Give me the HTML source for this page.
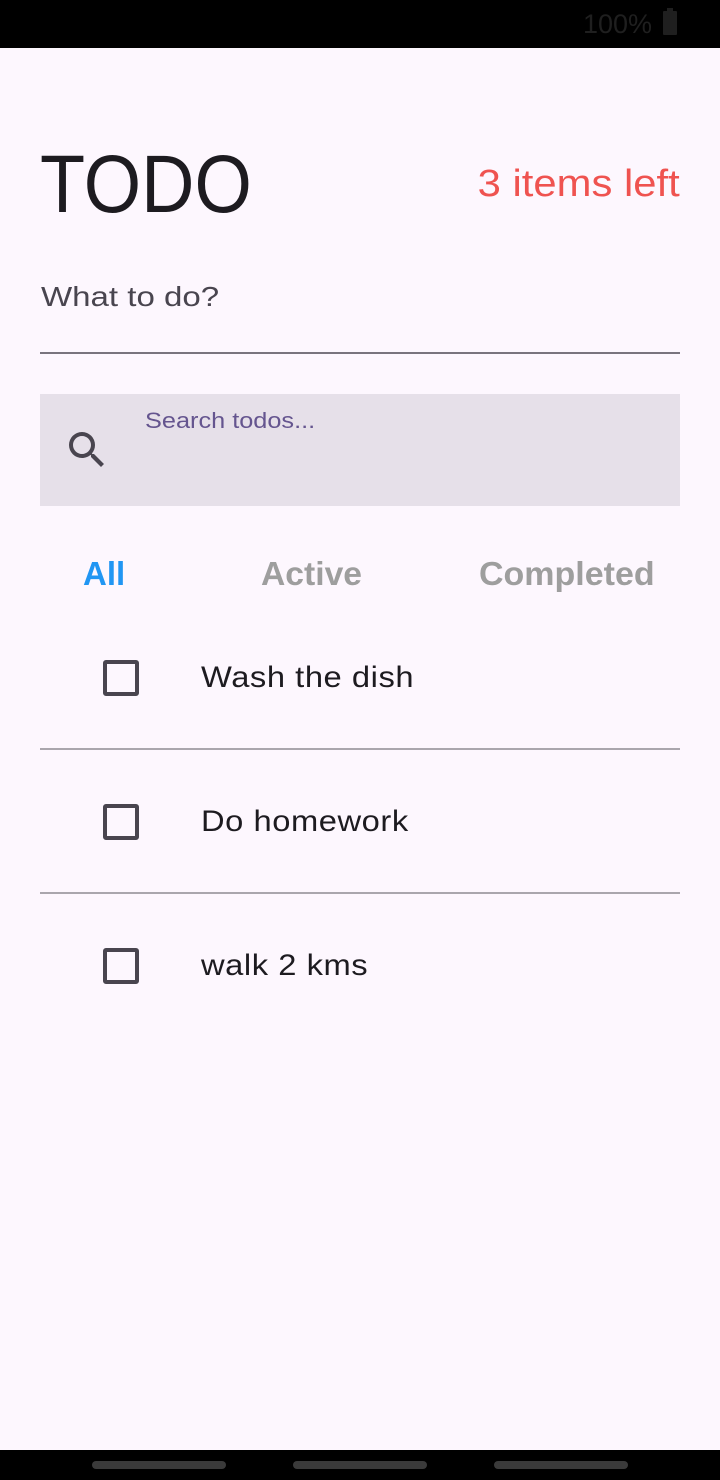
<!DOCTYPE html>
<html><head><meta charset="utf-8"><style>
body{margin:0;width:720px;height:1480px;background:#fdf7fe;font-family:"Liberation Sans",sans-serif;position:relative;overflow:hidden;color:#1d1b20}
.abs{position:absolute;white-space:nowrap}
.cb{position:absolute;left:103px;width:28px;height:28px;border:4px solid #49454f;border-radius:3px}
.item{position:absolute;left:201px;font-size:30px;line-height:30px;letter-spacing:0.5px;transform:scaleX(1.09);transform-origin:left top;white-space:nowrap}
.div{position:absolute;left:40px;width:640px;height:2px;background:#aaa6ad}
</style></head><body>
<div class="abs" style="left:0;top:0;width:720px;height:48px;background:#000"></div>
<div class="abs" style="left:583px;top:9px;font-size:27px;color:#1f1f1f;line-height:30px">100%</div>
<div class="abs" style="left:663px;top:11px;width:14px;height:24px;background:#1f1f1f;border-radius:1px"></div>
<div class="abs" style="left:667px;top:8px;width:6px;height:4px;background:#1f1f1f"></div>

<div class="abs" style="left:40px;top:144px;font-size:82px;line-height:82px;transform:scaleX(0.9);transform-origin:left top;color:#1d1b20">TODO</div>
<div class="abs" style="right:40px;top:164px;font-size:38px;line-height:40px;color:#ef5350;transform:scaleX(1.1);transform-origin:right top">3 items left</div>

<div class="abs" style="left:41px;top:282px;font-size:28px;line-height:30px;color:#49454f;transform:scaleX(1.18);transform-origin:left top">What to do?</div>
<div class="abs" style="left:40px;top:352px;width:640px;height:2px;background:#79747e"></div>

<div class="abs" style="left:40px;top:394px;width:640px;height:112px;background:#e6e0e9"></div>
<svg class="abs" style="left:63px;top:426px" width="48" height="48" viewBox="0 0 24 24"><path fill="#49454f" d="M15.5 14h-.79l-.28-.27A6.47 6.470 0 0 0 16 9.5 6.5 6.5 0 1 0 9.5 16c1.61 0 3.09-.59 4.23-1.57l.27.28v.79l5 4.99L20.49 19l-4.99-5zm-6 0C7.01 14 5 11.99 5 9.5S7.01 5 9.5 5 14 7.01 14 9.5 11.99 14 9.5 14z"/></svg>
<div class="abs" style="left:145px;top:409px;font-size:22px;line-height:24px;color:#65558f;transform:scaleX(1.15);transform-origin:left top">Search todos...</div>

<div class="abs" style="left:83px;top:556px;font-size:33px;line-height:36px;font-weight:bold;color:#2196f3;transform:scaleX(1.0);transform-origin:left top">All</div>
<div class="abs" style="left:261px;top:556px;font-size:33px;line-height:36px;font-weight:bold;color:#9e9e9e;transform:scaleX(1.02);transform-origin:left top">Active</div>
<div class="abs" style="left:479px;top:556px;font-size:33px;line-height:36px;font-weight:bold;color:#9e9e9e;transform:scaleX(1.03);transform-origin:left top">Completed</div>

<div class="cb" style="top:660px"></div>
<div class="item" style="top:663px">Wash the dish</div>
<div class="div" style="top:748px"></div>
<div class="cb" style="top:804px"></div>
<div class="item" style="top:807px">Do homework</div>
<div class="div" style="top:892px"></div>
<div class="cb" style="top:948px"></div>
<div class="item" style="top:951px">walk 2 kms</div>

<div class="abs" style="left:0;top:1450px;width:720px;height:30px;background:#000"></div>
<div class="abs" style="left:92px;top:1461px;width:134px;height:8px;border-radius:4px;background:#3a3a3a"></div>
<div class="abs" style="left:293px;top:1461px;width:134px;height:8px;border-radius:4px;background:#3a3a3a"></div>
<div class="abs" style="left:494px;top:1461px;width:134px;height:8px;border-radius:4px;background:#3a3a3a"></div>
</body></html>
